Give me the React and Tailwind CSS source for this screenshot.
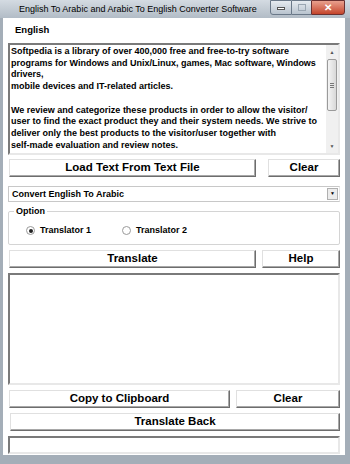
import { useState } from 'react'

const Btn = ({ className = '', children }) => (
  <button
    className={`h-[18px] bg-white border border-t-[#e0e0e0] border-l-[#e0e0e0] border-r-[#6d6d6d] border-b-[#6d6d6d] shadow-[inset_-1px_-1px_0_#a8a8a8] text-[11.5px] font-bold text-black leading-none ${className}`}
  >
    {children}
  </button>
)

const Sunken = ({ className = '', children }) => (
  <div
    className={`bg-white border-2 border-t-[#7a7a7a] border-l-[#7a7a7a] border-r-[#e8e8e8] border-b-[#e8e8e8] ${className}`}
  >
    {children}
  </div>
)

const Radio = ({ checked, label }) => (
  <label className="flex items-center gap-[5px]">
    <span className="w-[9px] h-[9px] rounded-full border border-[#9a9a9a] bg-white flex items-center justify-center">
      {checked && <span className="w-[4px] h-[4px] rounded-full bg-[#222]" />}
    </span>
    <span>{label}</span>
  </label>
)

const App = () => {
  const [mode] = useState('Convert English To Arabic')

  return (
    <div
      className="w-[350px] h-[464px] flex flex-col bg-[#a4aeb8] overflow-hidden"
      style={{ fontFamily: '"Liberation Sans", Arial, sans-serif' }}
    >
      <div className="h-[18px] flex items-center bg-gradient-to-b from-[#d4dbe2] to-[#b2bcc6] relative">
        <div className="pl-[19px] text-[9px] text-black leading-none whitespace-nowrap">
          English To Arabic and Arabic To English Converter Software
        </div>
        <div className="absolute right-[5px] top-0 flex">
          <div className="w-[22px] h-[15px] border border-[#6a7888] rounded-bl-[3px] bg-gradient-to-b from-[#e6ebf0] to-[#b8c3ce] flex items-end justify-center pb-[4px]">
            <span className="w-[8px] h-[3px] bg-white border border-[#555]" />
          </div>
          <div className="w-[19px] h-[15px] border-y border-[#6a7888] bg-gradient-to-b from-[#e6ebf0] to-[#b8c3ce] flex items-center justify-center">
            <span className="w-[8px] h-[7px] border border-[#9aa6b2]" />
          </div>
          <div className="w-[34px] h-[15px] border border-[#6a3030] rounded-br-[3px] bg-gradient-to-b from-[#e8a08e] to-[#c4432a] flex items-center justify-center text-white text-[10px] font-bold leading-none">
            ✕
          </div>
        </div>
      </div>

      <div className="flex-1 flex ml-[3px] mr-[5px] mb-[9px] bg-white">
        <div className="flex-1 flex flex-col px-[5px] text-black">
          <div className="h-[25px] flex items-center pl-[7px] text-[9.5px] font-bold">English</div>

          <Sunken className="h-[112px] flex">
            <div className="flex-1 pl-[1px] pt-[1px] text-[9px] font-bold leading-[11.7px] whitespace-pre-line overflow-hidden">
              {`Softpedia is a library of over 400,000 free and free-to-try software
programs for Windows and Unix/Linux, games, Mac software, Windows
drivers,
mobile devices and IT-related articles.

We review and categorize these products in order to allow the visitor/
user to find the exact product they and their system needs. We strive to
deliver only the best products to the visitor/user together with
self-made evaluation and review notes.`}
            </div>
            <div className="w-[12px] bg-[#f0f0f0] flex flex-col items-center">
              <div className="h-[14px] text-[5px] text-[#555] leading-[14px]">▲</div>
              <div className="w-[10px] h-[52px] rounded-[2px] border border-[#9a9a9a] bg-gradient-to-r from-[#f4f4f4] to-[#d8d8d8] flex flex-col items-center justify-center gap-[1px]">
                <span className="w-[4px] h-px bg-[#777]" />
                <span className="w-[4px] h-px bg-[#777]" />
                <span className="w-[4px] h-px bg-[#777]" />
              </div>
              <div className="flex-1" />
              <div className="h-[13px] text-[5px] text-[#555] leading-[13px]">▼</div>
            </div>
          </Sunken>

          <div className="flex mt-[4px] gap-[12px] pl-[1px]">
            <Btn className="w-[247px]">Load Text From Text File</Btn>
            <Btn className="flex-1">Clear</Btn>
          </div>

          <div className="mt-[9px] h-[16px] flex items-center border border-[#c8c8c8] border-r-[#e6e6e6] text-[9px] font-bold">
            <div className="flex-1 pl-[3px] pt-px">{mode}</div>
            <div className="w-[11px] h-[12px] mr-[1px] bg-[#ececec] border border-[#b0b0b0] flex items-center justify-center text-[5px]">▼</div>
          </div>

          <div className="mt-[9px] h-[34px] border border-[#d4d4d4] rounded-[2px] relative flex items-center pl-[17px] pt-[5px] text-[9px] font-bold">
            <div className="absolute -top-[7px] left-[5px] bg-white px-[2px] text-[9px] font-bold">Option</div>
            <div className="w-[96px]">
              <Radio checked label="Translator 1" />
            </div>
            <Radio label="Translator 2" />
          </div>

          <div className="flex mt-[5px] gap-[6px] pl-[1px]">
            <Btn className="w-[247px]">Translate</Btn>
            <Btn className="flex-1">Help</Btn>
          </div>

          <Sunken className="mt-[5px] h-[112px]" />

          <div className="flex mt-[5px] gap-[6px] pl-[1px]">
            <Btn className="w-[221px]">Copy to Clipboard</Btn>
            <Btn className="flex-1">Clear</Btn>
          </div>

          <div className="flex mt-[5px] pl-[2px]">
            <Btn className="flex-1">Translate Back</Btn>
          </div>

          <Sunken className="mt-[5px] h-[18px]" />
        </div>
      </div>
    </div>
  )
}

export default App
